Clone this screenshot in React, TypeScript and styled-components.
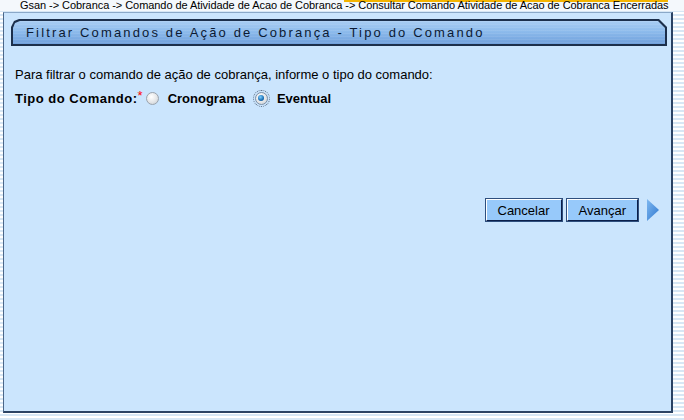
import React, { useState } from 'react';
import styled, { createGlobalStyle } from 'styled-components';

const GlobalStyle = createGlobalStyle`
  html, body {
    margin: 0;
    padding: 0;
  }
  body {
    font-family: "Liberation Sans", Arial, sans-serif;
    background: repeating-linear-gradient(
      to bottom,
      #ffffff 0px,
      #ffffff 2px,
      #d7e7f5 2px,
      #d7e7f5 4px
    );
    min-height: 420px;
  }
`;

const Page = styled.div`
  width: 684px;
  height: 420px;
  overflow: hidden;
`;

const Breadcrumb = styled.div`
  position: relative;
  height: 11px;
  line-height: 10px;
  padding-left: 20px;
  font-size: 11px;
  letter-spacing: -0.06px;
  color: #000;
  white-space: nowrap;
  overflow: hidden;
  background: #f4f8fc;

  &::before {
    content: '';
    position: absolute;
    top: 0;
    left: 344px;
    width: 324px;
    height: 2px;
    background: #f4b400;
  }

  span {
    position: relative;
  }
`;

const Panel = styled.div`
  box-sizing: border-box;
  margin: 1px 0 0 3px;
  width: 670px;
  height: 401px;
  background: #cbe5fd;
  border-top: 1px solid #8aa8c8;
  border-left: 1px solid #4b6688;
  border-right: 2px solid #2b4364;
  border-bottom: 2px solid #2b4364;
  padding: 6px 6px 0 7px;
`;

const TitleFrame = styled.div`
  height: 27px;
  background: #1c2f4b;
  clip-path: polygon(0 8px, 3px 2px, 8px 0, calc(100% - 8px) 0, 100% 8px, 100% 100%, 0 100%);
  padding: 2px;
  box-sizing: border-box;
  width: 656px;
`;

const TitleFill = styled.div`
  height: 100%;
  box-sizing: border-box;
  clip-path: polygon(0 7px, 2px 2px, 7px 0, calc(100% - 7px) 0, 100% 7px, 100% 100%, 0 100%);
  background:
    repeating-linear-gradient(to bottom, rgba(255, 255, 255, 0.08) 0 1px, transparent 1px 3px),
    linear-gradient(to bottom, #a9cdf3 0%, #8dbbec 45%, #6f9fdb 100%);
  padding-left: 13px;
  font-size: 13px;
  letter-spacing: 2.15px;
  line-height: 24px;
  color: #0c1a33;
  white-space: nowrap;
`;

const Intro = styled.p`
  margin: 21px 0 0 4px;
  font-size: 13px;
  line-height: 15px;
  color: #000;
`;

const FieldRow = styled.div`
  display: flex;
  align-items: center;
  margin: 8px 0 0 4px;
  height: 16px;
  font-size: 13px;
  font-weight: bold;
  color: #000;
`;

const FieldName = styled.span`
  letter-spacing: 0.5px;
`;

const Required = styled.span`
  color: #ff0000;
  font-weight: normal;
  margin: 0 3px 0 0;
  align-self: flex-start;
  line-height: 12px;
`;

const RadioLabel = styled.label`
  display: flex;
  align-items: center;
  margin-right: 10px;
  cursor: pointer;
`;

const Radio = styled.input.attrs({ type: 'radio' })`
  appearance: none;
  width: 13px;
  height: 13px;
  margin: 0 9px 0 0;
  border-radius: 50%;
  border: 1px solid #9aa3ad;
  background: radial-gradient(circle at 40% 35%, #ffffff 0%, #e4e6e8 55%, #c3c8cd 100%);
  box-sizing: border-box;
  position: relative;

  &:checked {
    border-color: #7b8fa6;
    outline: 1px dotted #5a6c80;
    outline-offset: 1px;
  }

  &:checked::after {
    content: '';
    position: absolute;
    left: 2.5px;
    top: 2.5px;
    width: 6px;
    height: 6px;
    border-radius: 50%;
    background: radial-gradient(circle at 40% 35%, #7fd0ff 0%, #1a6fb5 60%, #0a3f73 100%);
  }
`;

const Actions = styled.div`
  display: flex;
  justify-content: flex-end;
  align-items: center;
  gap: 5px;
  margin-top: 92px;
  padding-right: 5px;
`;

const Button = styled.button`
  height: 22px;
  padding: 0 11px;
  font-family: "Liberation Sans", Arial, sans-serif;
  font-size: 13px;
  color: #000;
  background: #97c9fa;
  border-top: 1px solid #ffffff;
  border-left: 1px solid #ffffff;
  border-right: 1px solid #0b1f4a;
  border-bottom: 1px solid #0b1f4a;
  outline: 1px solid #2e4f7e;
  cursor: pointer;
`;

const NextArrow = styled.svg`
  margin-left: 3px;
  width: 14px;
  height: 24px;
`;

export default function App() {
  const [tipo, setTipo] = useState('eventual');

  return (
    <Page>
      <GlobalStyle />
      <Breadcrumb>
        <span>
          Gsan -&gt; Cobranca -&gt; Comando de Atividade de Acao de Cobranca -&gt; Consultar Comando
          Atividade de Acao de Cobranca Encerradas
        </span>
      </Breadcrumb>
      <Panel>
        <TitleFrame>
          <TitleFill>Filtrar Comandos de Ação de Cobrança - Tipo do Comando</TitleFill>
        </TitleFrame>
        <Intro>Para filtrar o comando de ação de cobrança, informe o tipo do comando:</Intro>
        <FieldRow>
          <FieldName>Tipo do Comando:</FieldName>
          <Required>*</Required>
          <RadioLabel>
            <Radio
              name="tipo"
              checked={tipo === 'cronograma'}
              onChange={() => setTipo('cronograma')}
            />
            Cronograma
          </RadioLabel>
          <RadioLabel>
            <Radio
              name="tipo"
              checked={tipo === 'eventual'}
              onChange={() => setTipo('eventual')}
            />
            Eventual
          </RadioLabel>
        </FieldRow>
        <Actions>
          <Button>Cancelar</Button>
          <Button>Avançar</Button>
          <NextArrow viewBox="0 0 14 24">
            <defs>
              <linearGradient id="arrowFill" x1="0" y1="0" x2="1" y2="1">
                <stop offset="0" stopColor="#7fb8f0" />
                <stop offset="1" stopColor="#2f78d0" />
              </linearGradient>
            </defs>
            <polygon points="1,1 13,12 1,23" fill="url(#arrowFill)" />
          </NextArrow>
        </Actions>
      </Panel>
    </Page>
  );
}
